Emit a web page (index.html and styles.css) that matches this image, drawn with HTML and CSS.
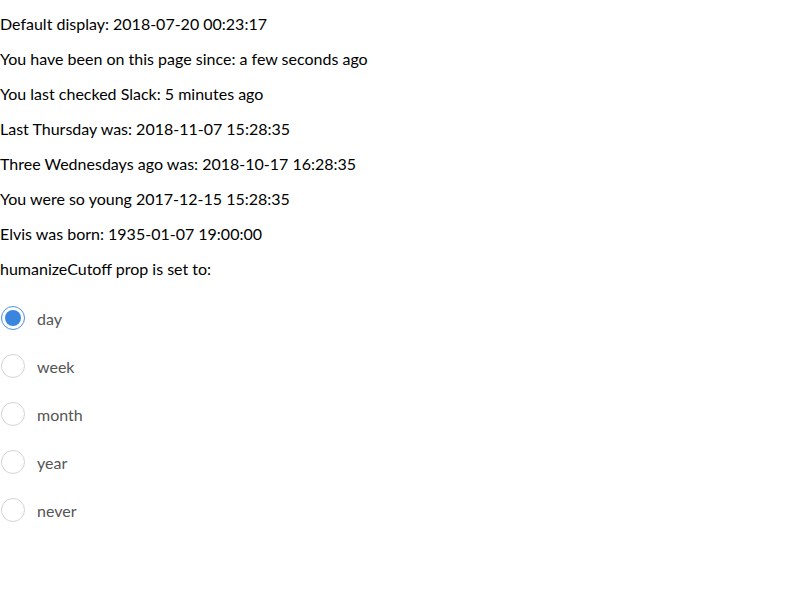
FILE: index.html
```html
<!DOCTYPE html>
<html>
<head>
<meta charset="utf-8">
<link rel="stylesheet" href="styles.css">
</head>
<body>
<div class="page">
  <p class="line">Default display: 2018-07-20 00:23:17</p>
  <p class="line">You have been on this page since: a few seconds ago</p>
  <p class="line">You last checked Slack: 5 minutes ago</p>
  <p class="line">Last Thursday was: 2018-11-07 15:28:35</p>
  <p class="line">Three Wednesdays ago was: 2018-10-17 16:28:35</p>
  <p class="line">You were so young 2017-12-15 15:28:35</p>
  <p class="line">Elvis was born: 1935-01-07 19:00:00</p>
  <p class="line">humanizeCutoff prop is set to:</p>
  <div class="radios">
    <label class="radio"><span class="dot checked"></span><span class="label">day</span></label>
    <label class="radio"><span class="dot"></span><span class="label">week</span></label>
    <label class="radio"><span class="dot"></span><span class="label">month</span></label>
    <label class="radio"><span class="dot"></span><span class="label">year</span></label>
    <label class="radio"><span class="dot"></span><span class="label">never</span></label>
  </div>
</div>
</body>
</html>
```
FILE: styles.css
```css
html, body {
  margin: 0;
  padding: 0;
  background: #fff;
}
body {
  font-family: Lato, "Open Sans", sans-serif;
  font-size: 16px;
  color: #000;
}
.page {
  padding-top: 14px;
}
.line {
  margin: 0 0 16px;
  line-height: 19px;
}
.radios {
  display: flex;
  flex-direction: column;
  gap: 24px;
  padding-top: 12px;
}
.radio {
  display: flex;
  align-items: center;
  height: 24px;
  padding-left: 1px;
}
.dot {
  box-sizing: border-box;
  width: 24px;
  height: 24px;
  border-radius: 50%;
  border: 1px solid #d4d4d4;
  background: #fff;
  position: relative;
}
.dot.checked {
  border-color: #4a90e2;
}
.dot.checked::after {
  content: "";
  position: absolute;
  left: 3px;
  top: 3px;
  width: 16px;
  height: 16px;
  border-radius: 50%;
  background: #3a86df;
}
.label {
  margin-left: 12px;
  color: #555;
  line-height: 19px;
}
```
